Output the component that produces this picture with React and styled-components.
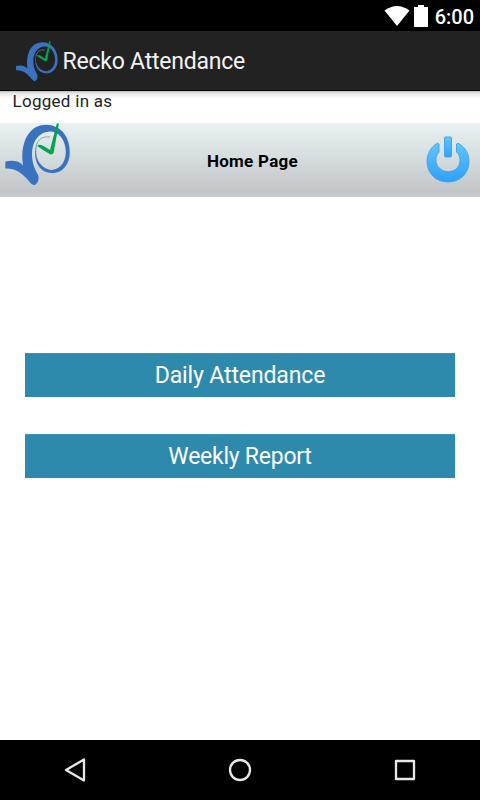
import styled, { createGlobalStyle } from "styled-components";

const GlobalStyle = createGlobalStyle`
  * {
    box-sizing: border-box;
  }

  body {
    margin: 0;
    background: #fff;
    font-family: Roboto, "Liberation Sans", sans-serif;
  }
`;

const Screen = styled.div`
  display: flex;
  flex-direction: column;
  width: 480px;
  height: 800px;
  overflow: hidden;
  background: #fff;
`;

const StatusBar = styled.div`
  display: flex;
  justify-content: flex-end;
  align-items: center;
  gap: 4px;
  height: 31px;
  padding-right: 6px;
  background: #000;
  color: #fff;
`;

const Clock = styled.span`
  margin-left: 3px;
  padding-top: 3px;
  font-size: 20px;
  font-weight: 500;
  line-height: 24px;
`;

const ActionBar = styled.header`
  display: flex;
  align-items: center;
  height: 60px;
  padding: 1px 0 0 15px;
  background: #222;
  border-bottom: 1px solid #000;
`;

const AppTitle = styled.h1`
  margin: 0 0 0 4.5px;
  padding-top: 1px;
  color: #f3f3f3;
  font-size: 23px;
  font-weight: 400;
  letter-spacing: -0.22px;
  line-height: 28px;
`;

const LoggedIn = styled.div`
  height: 32px;
  padding-left: 12.5px;
  background: linear-gradient(#bbb 0, #e4e4e4 2px, #f8f8f8 6px, #fff 9px);
  color: #222;
  font-size: 17px;
  letter-spacing: 0.28px;
  line-height: 21px;
`;

const PageHeader = styled.div`
  display: flex;
  align-items: center;
  justify-content: space-between;
  height: 74px;
  padding: 0 10px 0 4px;
  background: linear-gradient(#e9f1f3, #d5dcde 48%, #c2c6c8 92%, #c9cdcf);

  > svg {
    align-self: flex-start;
  }
`;

const PageTitle = styled.h2`
  margin: 0;
  padding: 2px 0 0 9px;
  color: #000;
  font-size: 17px;
  font-weight: 700;
  letter-spacing: 0.28px;
  line-height: 20px;
`;

const PowerButton = styled.button`
  display: flex;
  padding: 0;
  border: 0;
  background: none;
`;

const Menu = styled.main`
  flex: 1;
  display: flex;
  flex-direction: column;
  gap: 37px;
  padding: 156px 25px 0;
`;

const MenuButton = styled.button`
  height: 44px;
  padding: 2px 0 0;
  border: 0;
  border-top: 1px solid #3d91b2;
  border-bottom: 1px solid #3387a9;
  background: #2d8aad;
  color: #fff;
  font-family: inherit;
  font-size: 23px;
  letter-spacing: ${({ $tracking }) => $tracking};
  line-height: 40px;
`;

const NavBar = styled.nav`
  display: flex;
  align-items: center;
  justify-content: space-between;
  height: 60px;
  padding: 0 63px;
  background: #000;
`;

const Logo = ({ width, height }) => (
  <svg width={width} height={height} viewBox="0 0 66 62" overflow="visible">
    <path
      fill="#3973c0"
      d="M1.3 38.8C7 37 15 37.5 19.2 42.5C17.5 34 18 23 22.5 14C27 6 34 1.8 42 1.8C57 1.8 65.8 14 65.8 29C65.8 42 58 50.2 48 50.2V47C57 46 62 38 61.8 28C61 15 54 8.5 46 8.4C36 8.4 29.5 17 28.2 27C27.5 36 29 43 33.8 51.5C36 55 33.5 62 30 62C27.5 62 26 58.5 20.5 53.5C15 48 10 45.5 1.3 45.5Z"
    />
    <path
      fill="#3973c0"
      d="M34 18C28 29 31 50 48 50V47C37 46 28 35 34 18Z"
    />
    <path
      fill="none"
      stroke="#71ad99"
      strokeWidth="0.9"
      d="M32 23C34 16 39 13 46 14"
    />
    <path
      fill="#02a450"
      d="M33.5 23.2C34 20.5 38 21.5 46 27L52.8 .5L54.9 .5L49.6 30Q47.5 32.8 44.5 30.2Q38 26.5 33.5 23.2Z"
    />
  </svg>
);

const PowerIcon = () => (
  <svg width="44" height="48" viewBox="0 0 44 48">
    <defs>
      <linearGradient id="power" x1="0" y1="0" x2="0" y2="1">
        <stop offset="0" stopColor="#60c6fc" />
        <stop offset="1" stopColor="#309ffa" />
      </linearGradient>
    </defs>
    <path
      fill="url(#power)"
      stroke="#45a7ea"
      strokeWidth="1"
      d="M11.5 7.2L13 8V16.2C8.8 19.5 9 28 13 31.8C18 37 27 37 31.5 31.5C35 27 35 19.5 30.5 16V8L32 7.2C40 11.5 43 18.5 43 25.5C43 37.5 34 46 22 46S1 37.5 1 25.5C1 18.5 4.5 11 11.5 7.2Z"
    />
    <rect
      x="18.5"
      y="1"
      width="7"
      height="20"
      rx="1"
      fill="url(#power)"
      stroke="#45a7ea"
    />
  </svg>
);

const WifiIcon = () => (
  <svg width="26" height="20" viewBox="0 0 26 20">
    <path fill="#fff" d="M0.5 4.5Q13-4.5 25.5 4.5L13 20Z" />
  </svg>
);

const BatteryIcon = () => (
  <svg width="14" height="22" viewBox="0 0 14 22">
    <path fill="#fff" d="M0 2H4V0H10V2H14V22H0Z" />
  </svg>
);

const NavIcon = ({ children }) => (
  <svg
    width="24"
    height="26"
    viewBox="0 0 24 26"
    fill="none"
    stroke="#e8e8e8"
    strokeWidth="2.3"
    strokeLinejoin="round"
  >
    {children}
  </svg>
);

const App = () => {
  return (
    <Screen>
      <GlobalStyle />
      <StatusBar>
        <WifiIcon />
        <BatteryIcon />
        <Clock>6:00</Clock>
      </StatusBar>

      <ActionBar>
        <Logo width={43} height={40} />
        <AppTitle>Recko Attendance</AppTitle>
      </ActionBar>

      <LoggedIn>Logged in as</LoggedIn>

      <PageHeader>
        <Logo width={66} height={62} />
        <PageTitle>Home Page</PageTitle>
        <PowerButton aria-label="Log out">
          <PowerIcon />
        </PowerButton>
      </PageHeader>

      <Menu>
        <MenuButton $tracking="-0.12px">Daily Attendance</MenuButton>
        <MenuButton $tracking="-0.25px">Weekly Report</MenuButton>
      </Menu>

      <NavBar>
        <NavIcon>
          <path d="M21 2.5V23.5L3 13Z" />
        </NavIcon>
        <NavIcon>
          <circle cx="12" cy="13" r="10" />
        </NavIcon>
        <NavIcon>
          <path d="M3 4H21V22H3Z" />
        </NavIcon>
      </NavBar>
    </Screen>
  );
};

export default App;
